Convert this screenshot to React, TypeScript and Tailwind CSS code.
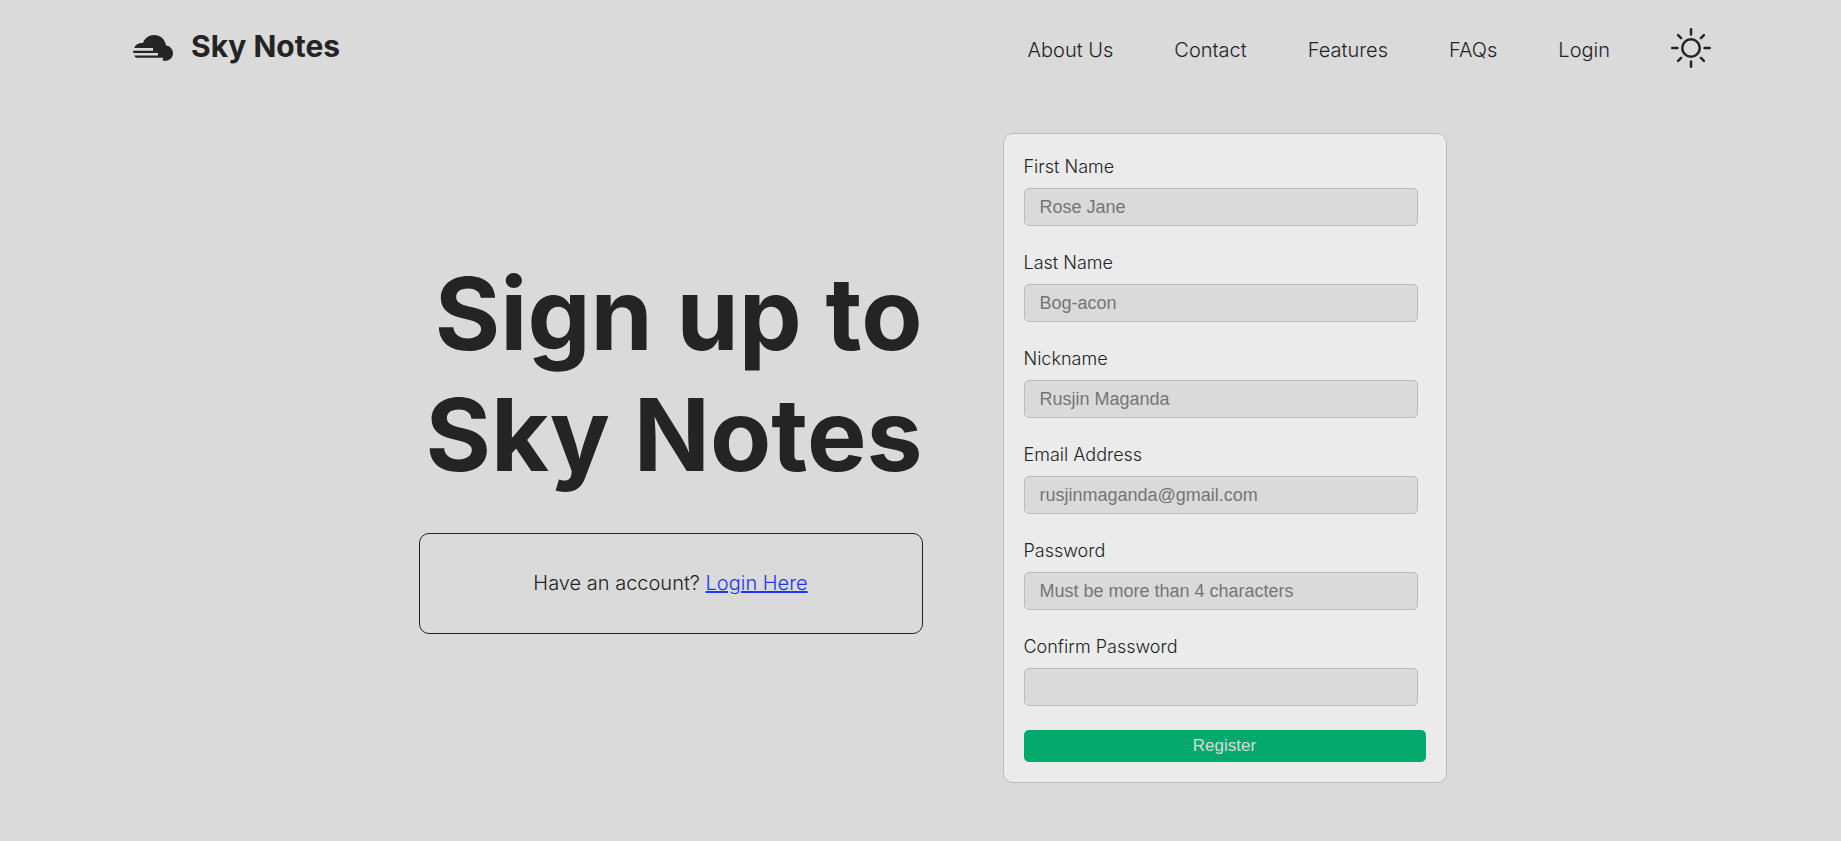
const links = ['About Us', 'Contact', 'Features', 'FAQs', 'Login'];

const fields = [
  { id: 'first-name', label: 'First Name', type: 'text', placeholder: 'Rose Jane' },
  { id: 'last-name', label: 'Last Name', type: 'text', placeholder: 'Bog-acon' },
  { id: 'nickname', label: 'Nickname', type: 'text', placeholder: 'Rusjin Maganda' },
  { id: 'email', label: 'Email Address', type: 'email', placeholder: 'rusjinmaganda@gmail.com' },
  { id: 'password', label: 'Password', type: 'password', placeholder: 'Must be more than 4 characters' },
  { id: 'confirm', label: 'Confirm Password', type: 'password', placeholder: '' },
];

function CloudLogo() {
  return (
    <svg viewBox="0 0 40 26" className="h-[26px] w-10" fill="currentColor" aria-hidden="true">
      <path d="M1.2 13 C2.2 10.2 4.8 8 8 8 L10 8 C11.7 3.2 16 0 21 0 C27.3 0 32.3 4.6 33 10.6 C37 11 40 14.4 40 18.2 C40 22.5 36.5 25.8 32.2 25.8 C31 25.8 30.2 25.7 29.4 25.3 L30.4 22.8 L4 22.8 C2.8 22.8 1.8 22 1.3 20.5 L25 20.5 L25 18 L0.4 18 L0 15.7 L20 15.7 L20 13 Z" />
    </svg>
  );
}

function SunIcon() {
  return (
    <svg
      viewBox="0 0 40 40"
      className="size-10"
      fill="none"
      stroke="currentColor"
      strokeWidth="2.5"
      strokeLinecap="round"
      aria-hidden="true"
    >
      <circle cx="20" cy="20" r="8.75" />
      <path d="M20 1.25V6.4M20 33.6V38.75M1.25 20H6.4M33.6 20H38.75M7.1 7.1L10.1 10.1M29.9 29.9L32.9 32.9M7.1 32.9L10.1 29.9M29.9 10.1L32.9 7.1" />
    </svg>
  );
}

function Header() {
  return (
    <header className="flex items-start justify-between px-[130px] pt-7">
      <a href="#home" className="flex items-center gap-[18px] pl-[3px]">
        <span className="pt-1">
          <CloudLogo />
        </span>
        <span className="text-[30px] leading-9 font-bold">Sky Notes</span>
      </a>
      <nav className="flex items-center gap-[61px]">
        {links.map((link) => (
          <a key={link} href={'#' + link.toLowerCase().replace(' ', '-')} className="pt-1 text-xl leading-6 font-light">
            {link}
          </a>
        ))}
        <button type="button" aria-label="Toggle theme">
          <SunIcon />
        </button>
      </nav>
    </header>
  );
}

export default function App() {
  return (
    <div className="min-h-screen bg-[#dadada] font-['Inter',sans-serif] text-[#242424]">
      <Header />
      <main className="flex items-center justify-center gap-20 pt-[65px] pb-14 pl-6">
        <section className="w-[504px] pb-[30px]">
          <h1 className="text-right text-[100px] leading-[121px] font-bold">
            Sign up to
            <br />
            Sky Notes
          </h1>
          <p className="mt-[38px] rounded-[10px] border border-[#242424] py-[37px] text-center text-xl leading-[25px] font-light">
            Have an account?{' '}
            <a href="#login" className="text-[#2036f5] underline decoration-2">
              Login Here
            </a>
          </p>
        </section>
        <form className="flex w-[444px] flex-col gap-6 rounded-[10px] border border-[#bcbcbc] bg-[#ebebeb] p-5">
          {fields.map((field) => (
            <div key={field.id} className="flex flex-col gap-2 pr-2">
              <label htmlFor={field.id} className="text-lg leading-[26px] font-light">
                {field.label}
              </label>
              <input
                id={field.id}
                type={field.type}
                placeholder={field.placeholder}
                className="h-[38px] rounded-[5px] border border-[#bcbcbc] bg-[#dadada] px-[15px] font-['Liberation_Sans',Arial,sans-serif] text-lg placeholder:text-[#757575]"
              />
            </div>
          ))}
          <button
            type="submit"
            className="h-8 rounded-[5px] bg-[#04aa6d] font-['Liberation_Sans',Arial,sans-serif] text-[17px] text-[#dadada]"
          >
            Register
          </button>
        </form>
      </main>
    </div>
  );
}
